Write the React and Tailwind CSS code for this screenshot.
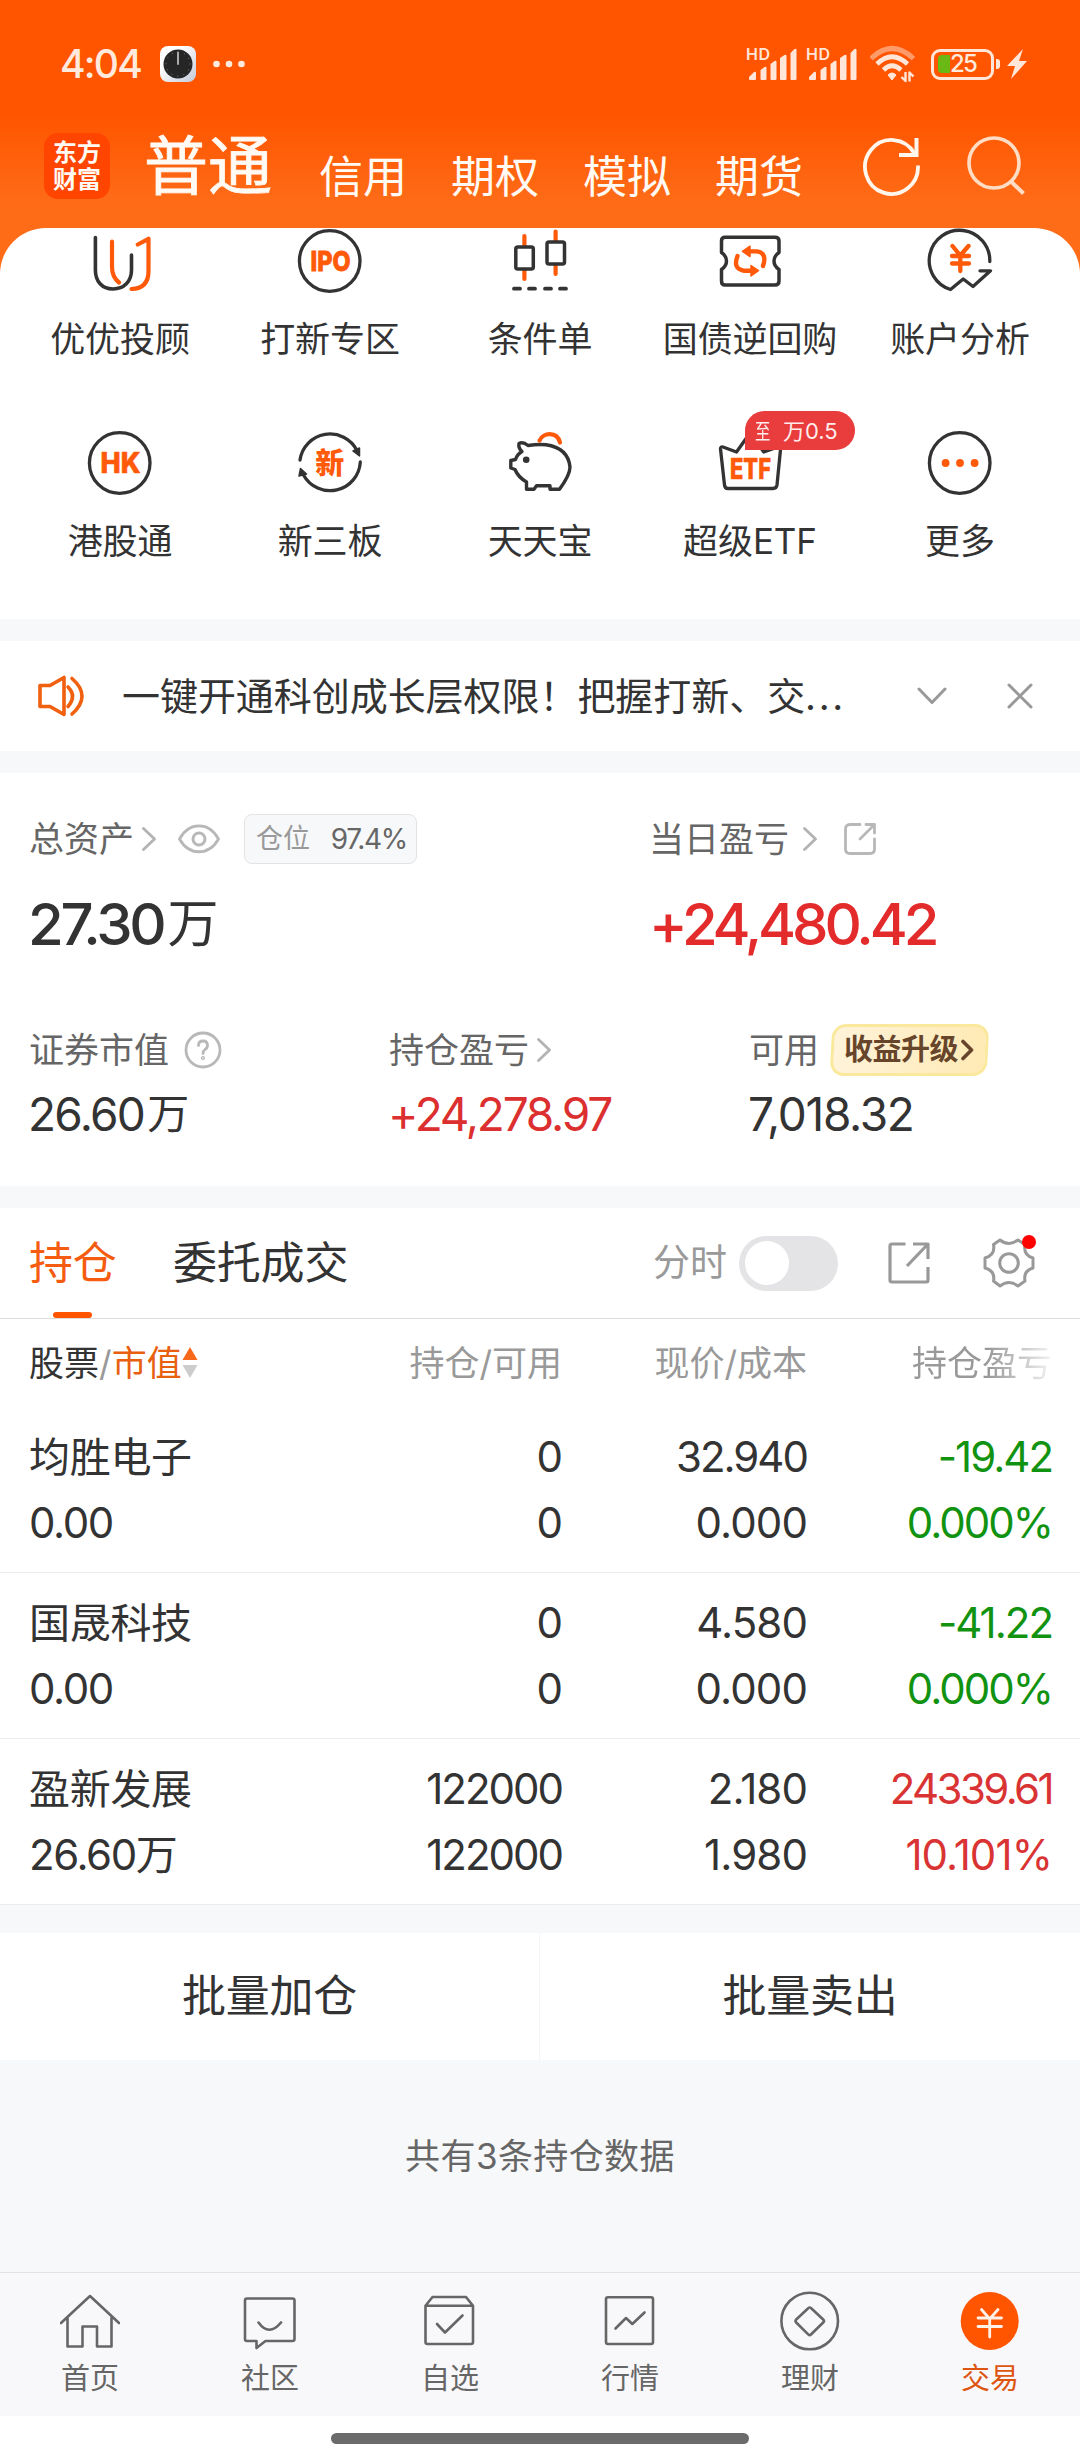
import React, { useState } from 'react';

const ORANGE = '#ff5a0a';
const DARK = '#333333';

function Svg({ className, box, children, ...rest }) {
    return (
        <svg
            className={className}
            viewBox={box}
            fill="none"
            strokeLinecap="round"
            strokeLinejoin="round"
            xmlns="http://www.w3.org/2000/svg"
            {...rest}
        >
            {children}
        </svg>
    );
}

/* ---------- Status bar ---------- */

function Signal() {
    return (
        <Svg className="w-[52px] h-[36px] overflow-visible" box="0 0 52 36">
            <text x="-2" y="14" fontFamily="Inter" fontSize="16" fontWeight="600" fill="#ffe6d8" textLength="24">HD</text>
            <path
                fill="#ffe6d8"
                d="M1 31l5-5q2-1 2 1v6q0 1-1 1H2q-1 0-1-1zM12.500 24l4-3q2-1 2 1v11q0 1-1 1h-4q-1 0-1-1zM22.500 18l4-3q2-1 2 1v17q0 1-1 1h-4q-1 0-1-1zM32 12l4.500-3q2-1 2 1v23q0 1-1 1H33q-1 0-1-1zM42.500 7l4-4q2-1 2 1v29q0 1-1 1h-4q-1 0-1-1z"
            />
        </Svg>
    );
}

function StatusBar() {
    return (
        <div className="flex h-[128px] items-center pl-[60px] pr-[53px] text-[#ffeadd]">
            <span className="w-[100px] text-[39px] leading-[40px] font-medium tracking-[-1.800px]">4:04</span>
            <Svg className="w-[36px] h-[36px]" box="0 0 36 36">
                <defs>
                    <linearGradient id="clock" x1="0" y1="0" x2="1" y2="1">
                        <stop offset="0.3" stopColor="#ffffff" />
                        <stop offset="1" stopColor="#c3c9da" />
                    </linearGradient>
                </defs>
                <rect width="36" height="36" rx="8" fill="url(#clock)" />
                <circle cx="18" cy="18" r="14.5" fill="#262626" />
                <circle cx="18" cy="18" r="12" stroke="#8a8a8a" strokeWidth="1" strokeDasharray="0.1 6.180" />
                <path d="M18 6.500V18" stroke="#aaaaaa" strokeWidth="2" />
            </Svg>
            <Svg className="ml-[16px] w-[34px] h-[10px]" box="0 0 34 10">
                <circle cx="4.500" cy="5" r="3.300" fill="#ffeadd" />
                <circle cx="17" cy="5" r="3.300" fill="#ffeadd" />
                <circle cx="29.500" cy="5" r="3.300" fill="#ffeadd" />
            </Svg>
            <div className="ml-auto flex items-center">
                <Signal />
                <div className="ml-[8px]">
                    <Signal />
                </div>
                <Svg className="ml-[10px] w-[48px] h-[38px]" box="0 0 48 38" strokeLinecap="butt">
                    <path d="M1 13.500Q22 -6.500 43.500 13.500" stroke="#ff9a6a" strokeWidth="5" />
                    <path d="M7 19Q22 4.500 37.500 19M13.500 25Q22 16.500 31 25" stroke="#ffe6d8" strokeWidth="4.600" />
                    <path d="M18 30q4-4 8 0l-4 5z" fill="#ffe6d8" stroke="#ffe6d8" strokeWidth="1" />
                    <path d="M35.500 27v9l-4-4M39.500 36.500v-9l4 4" stroke="#ffe6d8" strokeWidth="2.400" />
                </Svg>
                <div className="ml-[13px] flex h-[31px] w-[63px] items-center rounded-[9px] border-[3px] border-[#ffe6d8] pl-[4px]">
                    <span className="h-[18px] w-[12px] rounded-l-[4px] bg-[#6ab813]"></span>
                    <span className="text-[24px] leading-[24px] font-medium tracking-[-1.800px]">25</span>
                </div>
                <span className="ml-[2px] h-[10px] w-[4px] rounded-r-[3px] bg-[#ffe6d8]"></span>
                <Svg className="ml-[7px] w-[20px] h-[30px]" box="0 0 20 30">
                    <path d="M16 0L0 17H8L4 30L20 12H12Z" fill="#ffe6d8" />
                </Svg>
            </div>
        </div>
    );
}

/* ---------- Top navigation ---------- */

function TopNav() {
    return (
        <div className="flex h-[76px] items-center pl-[44px] text-[#fffaf4]">
            <div className="flex h-[66px] w-[66px] flex-col items-center justify-center rounded-[14px] bg-[#ff4500] text-[24px] leading-[27px] font-bold">
                <span>东方</span>
                <span>财富</span>
            </div>
            <span className="ml-[34px] w-[175px] text-[64px] leading-[78px] [-webkit-text-stroke:0.800px_#fffaf4]">普通</span>
            <nav className="flex gap-[44px] pt-[22px] text-[44px] leading-[54px]">
                <span>信用</span>
                <span>期权</span>
                <span>模拟</span>
                <span>期货</span>
            </nav>
            <Svg className="ml-[58px] w-[62px] h-[62px]" box="0 0 62 62" strokeLinecap="butt" strokeLinejoin="miter">
                <path d="M57 30.500A26.500 27 0 1 1 53.500 18.500" stroke="#fff6ec" strokeWidth="3.800" />
                <path d="M55.500 3V20H38" stroke="#fff6ec" strokeWidth="4" />
            </Svg>
            <Svg className="ml-[42px] w-[62px] h-[62px]" box="0 0 62 62" strokeLinecap="butt">
                <circle cx="29" cy="28" r="25" stroke="#ffdcc4" strokeWidth="3.600" />
                <path d="M45.500 46L58.500 58.500" stroke="#ffdcc4" strokeWidth="4" />
            </Svg>
        </div>
    );
}

/* ---------- Shortcut icons (64 x 64) ---------- */

const ring = <circle cx="31.700" cy="32" r="30.300" stroke={DARK} strokeWidth="3.300" />;

const icons = {
    advisor: (
        <>
            <path d="M7.400 8.500V41C7.400 52.500 14 60 25 60S43.500 52.500 43.500 41V26" stroke={DARK} strokeWidth="3.600" />
            <path d="M24 12.500V38Q24 48 31 53.500M49.800 15.500L60.500 9.800V42Q60.500 59.500 43.500 60" stroke={ORANGE} strokeWidth="4.200" />
        </>
    ),
    ipo: (
        <>
            {ring}
            <text x="12.500" y="42" fontFamily="Inter" fontSize="27.500" fontWeight="800" fill={ORANGE} stroke={ORANGE} strokeWidth="0.800" textLength="40" lengthAdjust="spacingAndGlyphs">IPO</text>
        </>
    ),
    condition: (
        <>
            <path d="M16.400 7V17M16.400 41V50M47.600 2.500V12M47.600 36V45" stroke={ORANGE} strokeWidth="4.200" />
            <rect x="7.800" y="18" width="17.500" height="22" rx="2" stroke={DARK} strokeWidth="3.500" />
            <rect x="39" y="13" width="17.500" height="22" rx="2" stroke={DARK} strokeWidth="3.500" />
            <path d="M6 59.700H12M21 59.700H27M37 59.700H43M52 59.700H58" stroke={DARK} strokeWidth="3.800" />
        </>
    ),
    repo: (
        <>
            <path d="M7 8.200H57Q61 8.200 61 12V23.500Q56 27 56 32T61 40.500V52Q61 56 57 56H7Q3.500 56 3.500 52V40.500Q8.500 37 8.500 32T3.500 23.500V12Q3.500 8.200 7 8.200Z" stroke={DARK} strokeWidth="3.500" />
            <path d="M19.500 27Q14.500 40 26 41.700H33M45 37Q49.500 24 39 22.400H32" stroke={ORANGE} strokeWidth="4.400" />
            <path d="M33 36.500V47L40.500 41.700ZM32 17.200V27.600L24.500 22.400Z" fill={ORANGE} stroke={ORANGE} strokeWidth="1.500" />
        </>
    ),
    analysis: (
        <>
            <path d="M61.800 32.500A30.300 30.300 0 1 0 22.500 60.500L35.200 50L45 57.500L62.500 41.800H52" stroke={DARK} strokeWidth="3.300" />
            <path d="M24.500 17L32.300 26.500L40.500 17M32.300 26.500V42M24 27H41M24 34.500H41" stroke={ORANGE} strokeWidth="4.300" />
        </>
    ),
    hk: (
        <>
            {ring}
            <text x="12.500" y="42" fontFamily="Inter" fontSize="28" fontWeight="800" fill={ORANGE} stroke={ORANGE} strokeWidth="0.600" textLength="40" lengthAdjust="spacingAndGlyphs">HK</text>
        </>
    ),
    neeq: (
        <>
            <path d="M2 29A30.300 30.300 0 0 1 59 19.500M62.300 31A30.300 30.300 0 0 1 5.500 44" stroke={DARK} strokeWidth="3.300" />
            <path d="M55 20L61.500 17V25ZM1 45L2.500 37.500L8.500 43Z" fill={DARK} stroke={DARK} strokeWidth="1.500" />
            <text x="17.200" y="43" fontFamily="Noto Sans CJK SC" fontSize="29" fontWeight="900" fill={ORANGE}>新</text>
        </>
    ),
    piggy: (
        <>
            <path d="M11 12.500Q15 10.500 20 14.500Q30 13 38 13.800Q60 17 62 36Q62 44 51.500 58.200H42V54.800H28.500L26 58.200H18.500V51Q10 46 7 38.500L2.800 37V29.500L7.500 28.500Q9 23.500 14 20.500Q10 17 11 12.500Z" stroke={DARK} strokeWidth="3.400" />
            <path d="M31.500 9.500C35 1.500 49 0 52 11.500" stroke={ORANGE} strokeWidth="4.200" />
            <circle cx="18.200" cy="28.700" r="3.300" fill={DARK} />
        </>
    ),
    etf: (
        <>
            <path d="M5 16L18.500 21L32 2L45.800 21L60 16Q63 15.500 62.500 18.500L59 54Q58.500 57.500 55 57.500H10Q6.800 57.500 6.500 54L2.500 18Q2.300 15.500 5 16Z" stroke={DARK} strokeWidth="3.300" />
            <text x="12" y="48" fontFamily="Inter" fontSize="28.500" fontWeight="800" fill={ORANGE} stroke={ORANGE} strokeWidth="0.600" textLength="41" lengthAdjust="spacingAndGlyphs">ETF</text>
        </>
    ),
    more: (
        <>
            {ring}
            <circle cx="17.600" cy="32" r="3.900" fill={ORANGE} />
            <circle cx="32" cy="32" r="3.900" fill={ORANGE} />
            <circle cx="46.600" cy="32" r="3.900" fill={ORANGE} />
        </>
    ),
};

const shortcuts = [
    { icon: 'advisor', label: '优优投顾' },
    { icon: 'ipo', label: '打新专区' },
    { icon: 'condition', label: '条件单' },
    { icon: 'repo', label: '国债逆回购' },
    { icon: 'analysis', label: '账户分析' },
    { icon: 'hk', label: '港股通' },
    { icon: 'neeq', label: '新三板' },
    { icon: 'piggy', label: '天天宝' },
    { icon: 'etf', label: '超级ETF', badge: true },
    { icon: 'more', label: '更多' },
];

function Shortcuts() {
    return (
        <div className="grid h-[391px] grid-cols-5 content-start gap-y-[70px] rounded-t-[46px] bg-white px-[15px] pt-px">
            {shortcuts.map((item) => (
                <div key={item.label} className="relative flex flex-col items-center">
                    <Svg className="w-[64px] h-[64px] overflow-visible" box="0 0 64 64">
                        {icons[item.icon]}
                    </Svg>
                    <span className="mt-[24px] text-[35px] leading-[44px] tracking-[-0.100px] whitespace-nowrap text-[#333]">{item.label}</span>
                    {item.badge && (
                        <div className="absolute top-[-20px] left-[100px] flex h-[39px] w-[110px] items-center rounded-[20px] rounded-bl-none bg-[#e93c3c] pl-[10px] text-[22px] leading-[24px] text-[#ffecec]">
                            <span className="w-[22px] origin-left scale-x-[0.7]">至</span>
                            <span className="ml-[6px]">万0.5</span>
                        </div>
                    )}
                </div>
            ))}
        </div>
    );
}

/* ---------- Notice ---------- */

function Notice() {
    return (
        <div className="flex h-[110px] items-center bg-white pl-[36px]">
            <Svg className="w-[50px] h-[44px]" box="0 0 50 44" stroke="#f0600f" strokeWidth="3.600">
                <path d="M4 11.500H14L28 3.500V40.500L14 32.500H4Z" />
                <path d="M32 13Q41 22 32 32.500M36 4.500Q56 22 36 40" />
            </Svg>
            <span className="ml-[36px] w-[795px] text-[38px] leading-[50px] tracking-[-0.050px] whitespace-nowrap text-[#333]">
                一键开通科创成长层权限！把握打新、交<span className="tracking-[2.600px]">...</span>
            </span>
            <Svg className="w-[30px] h-[18px]" box="0 0 30 18" stroke="#999" strokeWidth="3">
                <path d="M2 2L15 15.500L28 2" />
            </Svg>
            <Svg className="ml-[60px] w-[26px] h-[26px]" box="0 0 26 26" stroke="#999" strokeWidth="3">
                <path d="M2 2L24 24M24 2L2 24" />
            </Svg>
        </div>
    );
}

/* ---------- Assets ---------- */

function Chevron({ className }) {
    return (
        <Svg className={className} box="0 0 14 24" stroke="#b3b3b3" strokeWidth="2.800">
            <path d="M1.500 1.500L12.500 12L1.500 22.500" />
        </Svg>
    );
}

function Assets() {
    return (
        <div className="h-[413px] bg-white pt-[41px] text-[35px] leading-[50px] text-[#666]">
            <div className="grid h-[50px] grid-cols-[649px_1fr]">
                <div className="flex items-center pl-[29px]">
                    <span>总资产</span>
                    <Chevron className="ml-[8px] w-[14px] h-[24px]" />
                    <Svg className="ml-[22px] w-[42px] h-[30px]" box="0 0 42 30" stroke="#b8b8b8" strokeWidth="2.800">
                        <path d="M1.500 15C11 -2.500 31 -2.500 40.500 15C31 32 11 32 1.500 15Z" />
                        <circle cx="21" cy="15" r="6" strokeWidth="3" />
                    </Svg>
                    <div className="ml-[24px] flex h-[50px] w-[173px] items-center justify-between rounded-[8px] border border-[#e3e3e3] bg-[#f7f8fa] pl-[11px] pr-[9px]">
                        <span className="text-[27px] text-[#999]">仓位</span>
                        <span className="text-[28px] tracking-[-1.300px]">97.4%</span>
                    </div>
                </div>
                <div className="flex items-center">
                    <span>当日盈亏</span>
                    <Chevron className="ml-[14px] w-[14px] h-[24px]" />
                    <Svg className="ml-[26px] w-[34px] h-[34px]" box="0 0 34 34" stroke="#b8b8b8" strokeWidth="2.800">
                        <path d="M17 2.500H7Q2.500 2.500 2.500 7V27Q2.500 31.500 7 31.500H27Q31.500 31.500 31.500 27V17M23 2.500H31.500V11M31 3L17 17" />
                    </Svg>
                </div>
            </div>

            <div className="mt-[25px] grid h-[70px] grid-cols-[649px_1fr] text-[58px] leading-[70px] font-medium">
                <div className="flex pl-[28px] text-[#333]">
                    <span className="tracking-[-3.200px]">27.30</span>
                    <span className="ml-[4px] text-[51px] font-normal">万</span>
                </div>
                <div className="tracking-[-4.100px] text-[#e32b2b]">+24,480.42</div>
            </div>

            <div className="mt-[65px] grid h-[50px] grid-cols-[360px_360px_1fr] pl-[29px]">
                <div className="flex items-center">
                    <span>证券市值</span>
                    <Svg className="ml-[15px] w-[38px] h-[38px]" box="0 0 38 38" stroke="#b8b8b8" strokeWidth="2.800">
                        <circle cx="19" cy="19" r="17" />
                        <path d="M14.500 14.500Q14.500 10 19 10T23.500 14.500Q23.500 17 21 18.500Q19 20 19 22.500" />
                        <circle cx="19" cy="27" r="0.700" />
                    </Svg>
                </div>
                <div className="flex items-center">
                    <span>持仓盈亏</span>
                    <Chevron className="ml-[8px] w-[14px] h-[24px]" />
                </div>
                <div className="flex items-center">
                    <span>可用</span>
                    <div className="relative ml-[12px] flex h-[52px] w-[157px] items-center pl-[13px]">
                        <div className="absolute inset-0 -skew-x-3 rounded-[14px] border-[3px] border-[#fae99c] bg-gradient-to-r from-[#fff3d9] to-[#ffeab5]"></div>
                        <span className="relative text-[29px] font-bold tracking-[-0.500px] text-[#67452b]">收益升级</span>
                        <Svg className="relative ml-[3px] w-[13px] h-[22px]" box="0 0 13 22" stroke="#67452b" strokeWidth="3.600">
                            <path d="M2 2.500L10.500 11L2 19.500" />
                        </Svg>
                    </div>
                </div>
            </div>

            <div className="mt-[10px] grid h-[60px] grid-cols-[360px_360px_1fr] pl-[28px] text-[46px] leading-[60px] text-[#333]">
                <div className="flex">
                    <span className="tracking-[-1.700px]">26.60</span>
                    <span className="ml-[3px] text-[42px]">万</span>
                </div>
                <div className="tracking-[-2.200px] text-[#dc2f2f]">+24,278.97</div>
                <div className="tracking-[-1.300px]">7,018.32</div>
            </div>
        </div>
    );
}

/* ---------- Positions ---------- */

function PositionTabs({ minute, onToggle }) {
    return (
        <div className="flex h-[111px] items-center border-b border-[#dddddd] bg-white pl-[29px]">
            <div className="relative flex h-[110px] w-[144px] items-center text-[44px] tracking-[-0.200px] text-[#f55c10]">
                持仓
                <span className="absolute bottom-0 left-[24px] h-[6px] w-[39px] rounded-full bg-[#ff5500]"></span>
            </div>
            <span className="w-[480px] text-[44px] tracking-[-0.200px] text-[#333]">委托成交</span>
            <span className="w-[86px] text-[37px] text-[#999]">分时</span>
            <button
                type="button"
                onClick={onToggle}
                className={
                    minute
                        ? 'flex h-[55px] w-[99px] items-center justify-end rounded-full bg-[#ff5500] px-[6px]'
                        : 'flex h-[55px] w-[99px] items-center rounded-full bg-[#e4e4e6] px-[6px]'
                }
            >
                <span className="h-[44px] w-[44px] rounded-full bg-white"></span>
            </button>
            <Svg className="ml-[49px] w-[44px] h-[44px]" box="0 0 44 44" stroke="#999" strokeWidth="3.200" strokeLinecap="butt">
                <path d="M18.500 3H5Q3 3 3 5V39Q3 41 5 41H39.500Q41 41 41 39V26M26 3H41V18M40.500 3.500L20 25" />
            </Svg>
            <div className="relative ml-[52px]">
                <Svg className="w-[52px] h-[52px]" box="0 0 52 52" stroke="#999" strokeWidth="3">
                    <path d="M10.500 7.500L17 3Q26 10 35 3L42 7.500Q40 18 50 21V31Q40 34 42 44L35 49Q26 42 17 49L10.500 44Q12.500 34 2 31V21Q12.500 18 10.500 7.500Z" />
                    <circle cx="26" cy="26" r="9.300" />
                </Svg>
                <span className="absolute top-[-2px] right-[-1px] h-[14px] w-[14px] rounded-full bg-[#ff0000]"></span>
            </div>
        </div>
    );
}

const positions = [
    { name: '均胜电子', value: '0.00', hold: '0', usable: '0', price: '32.940', cost: '0.000', profit: '-19.42', rate: '0.000%', up: false },
    { name: '国晟科技', value: '0.00', hold: '0', usable: '0', price: '4.580', cost: '0.000', profit: '-41.22', rate: '0.000%', up: false },
    { name: '盈新发展', value: '26.60万', hold: '122000', usable: '122000', price: '2.180', cost: '1.980', profit: '24339.61', rate: '10.101%', up: true },
];

function Num({ children, className }) {
    return (
        <span className={className}>
            <span className={children.length > 7 ? 'tracking-[-2.600px]' : children.length === 6 ? 'tracking-[-2px]' : 'tracking-[-0.900px]'}>
                {children}
            </span>
        </span>
    );
}

function PositionTable() {
    return (
        <div className="bg-white">
            <div className="grid h-[88px] grid-cols-[300px_233px_245px_245px] items-center pl-[29px] text-right text-[35px] text-[#999]">
                <div className="flex items-center text-left">
                    <span className="text-[#333]">股票</span>
                    <span>/</span>
                    <span className="text-[#e8600f]">市值</span>
                    <Svg className="w-[16px] h-[32px]" box="0 0 16 32">
                        <path d="M8 0L15.500 13H0.500Z" fill="#f9691b" />
                        <path d="M8 31L15.500 18H0.500Z" fill="#cccccc" />
                    </Svg>
                </div>
                <span>持仓/可用</span>
                <span>现价/成本</span>
                <span className="bg-gradient-to-r from-[#999] from-[74%] to-[#f4f4f4] bg-clip-text text-transparent">持仓盈亏</span>
            </div>
            {positions.map((p) => (
                <div
                    key={p.name}
                    className="grid h-[166px] grid-cols-[300px_233px_245px_245px] content-start gap-y-[6px] border-b border-[#ececec] pt-[20px] pl-[29px] text-right text-[42px] leading-[60px] text-[#333]"
                >
                    <span className="text-left text-[41px] tracking-[-0.300px]">{p.name}</span>
                    <Num>{p.hold}</Num>
                    <Num>{p.price}</Num>
                    <Num className={p.up ? 'text-[#d93333]' : 'text-[#119311]'}>{p.profit}</Num>
                    <span className="text-left tracking-[-1.400px]">{p.value}</span>
                    <Num>{p.usable}</Num>
                    <Num>{p.cost}</Num>
                    <Num className={p.up ? 'text-[#d93333]' : 'text-[#119311]'}>{p.rate}</Num>
                </div>
            ))}
        </div>
    );
}

/* ---------- Bottom tabs (60 x 60 icons) ---------- */

const tabs = [
    {
        label: '首页',
        icon: <path d="M1 32L30 5L59 32M7.500 27V55.500H22.500V35.500H37V55.500H51.500V27" />,
    },
    {
        label: '社区',
        icon: <path d="M7 7.500H52.500Q54.500 7.500 54.500 9.500V48Q54.500 50 52.500 50H25.500L16.500 57V50H7Q5 50 5 48V9.500Q5 7.500 7 7.500ZM18.500 31.500Q29 46 41 31.500" />,
    },
    {
        label: '自选',
        icon: <path d="M5.500 14.700L12.500 6H46L53 14.700V51Q53 53 51 53H7.500Q5.500 53 5.500 51ZM5.500 14.700H53M17 33L25 41.500L42.500 24.500" />,
    },
    {
        label: '行情',
        icon: <path d="M8 6.200H51Q53 6.200 53 8.200V51Q53 53 51 53H8Q6 53 6 51V8.200Q6 6.200 8 6.200ZM15.500 37.500L26 27L32.300 33L44.500 21.500" />,
    },
    {
        label: '理财',
        icon: (
            <>
                <circle cx="29.700" cy="30" r="28.300" />
                <path d="M28.200 17.200Q29.700 15.700 31.200 17.200L43.200 28.500Q44.700 30 43.200 31.500L31.200 43.300Q29.700 44.800 28.200 43.300L16.200 31.500Q14.700 30 16.200 28.500Z" />
            </>
        ),
    },
    {
        label: '交易',
        active: true,
        icon: (
            <>
                <circle cx="29.700" cy="30" r="29" fill="#ff5500" stroke="none" />
                <path d="M21.500 18.500L29.700 28L38 18.500M29.700 28V46M18 27H41.500M18 35.500H41.500" stroke="#fff1e8" strokeWidth="2.800" />
            </>
        ),
    },
];

function BottomTabs() {
    return (
        <nav className="grid h-[144px] grid-cols-6 border-t border-[#e2e3e5] bg-[#f8f8fa]">
            {tabs.map((tab) => (
                <div key={tab.label} className="flex flex-col items-center pt-[18px]">
                    <Svg className="w-[60px] h-[60px]" box="0 0 60 60" stroke="#666" strokeWidth="2.600">
                        {tab.icon}
                    </Svg>
                    <span className={tab.active ? 'mt-[8px] text-[29px] leading-[40px] text-[#dd5510]' : 'mt-[8px] text-[29px] leading-[40px] text-[#666]'}>
                        {tab.label}
                    </span>
                </div>
            ))}
        </nav>
    );
}

export default function App() {
    const [minute, setMinute] = useState(false);

    return (
        <div className="h-[2460px] w-[1080px] overflow-hidden bg-[#f7f8fa] font-['Inter','Noto_Sans_CJK_SC',sans-serif]">
            {/* Header + shortcuts */}
            <div className="bg-[linear-gradient(180deg,#ff5500_0px,#ff5500_115px,#ff6c18_205px,#ff6d18_100%)]">
                <StatusBar />
                <TopNav />
                <div className="pt-[24px]">
                    <Shortcuts />
                </div>
            </div>

            <div className="mt-[22px]">
                <Notice />
            </div>
            <div className="mt-[22px]">
                <Assets />
            </div>

            {/* Positions */}
            <div className="mt-[22px]">
                <PositionTabs minute={minute} onToggle={() => setMinute(!minute)} />
                <PositionTable />
            </div>

            <div className="mt-[28px] grid h-[127px] grid-cols-2 bg-white text-center text-[44px] leading-[126px] tracking-[-0.200px] text-[#333]">
                <span className="border-r border-[#f5f5f5]">批量加仓</span>
                <span>批量卖出</span>
            </div>

            <div className="flex h-[212px] items-start justify-center pt-[71px] text-[35px] leading-[50px] tracking-[0.400px] text-[#666]">
                共有3条持仓数据
            </div>

            <BottomTabs />
            <div className="flex h-[44px] items-center justify-center bg-white">
                <span className="mt-[1px] h-[11px] w-[418px] rounded-full bg-[#6b6b6b]"></span>
            </div>
        </div>
    );
}
